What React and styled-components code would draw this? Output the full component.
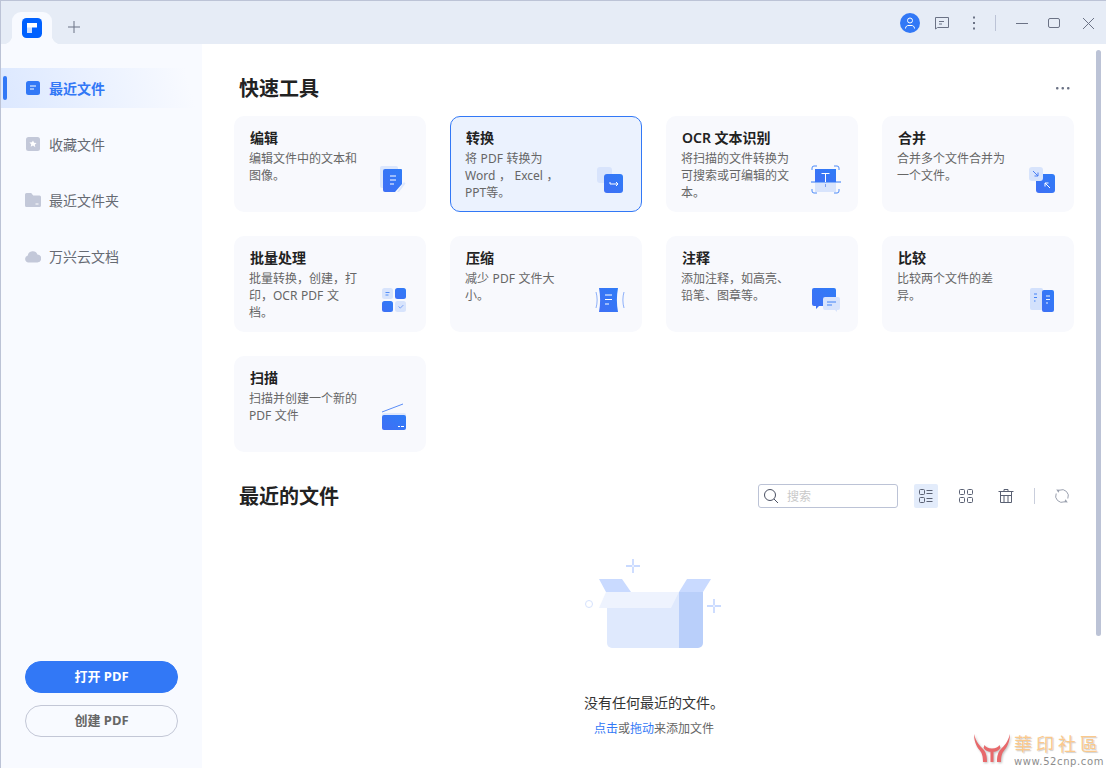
import React from "react";
import styled, { createGlobalStyle } from "styled-components";

const GlobalStyle = createGlobalStyle`
  html, body {
    margin: 0;
    height: 100%;
    overflow: hidden;
    background: #fff;
  }
  * {
    box-sizing: border-box;
  }
`;

const Page = styled.div`
  position: relative;
  display: flex;
  flex-direction: column;
  width: 100vw;
  height: 100vh;
  border-left: 1px solid #bcc3d6;
  font-family: "Noto Sans", "Noto Sans CJK SC", sans-serif;
  overflow: hidden;
`;

const TopBar = styled.div`
  flex: none;
  display: flex;
  align-items: flex-end;
  justify-content: space-between;
  height: 44px;
  padding-left: 11px;
  padding-right: 10px;
  background: #e6ecf6;
  border-top: 1px solid #bcc3d6;
`;

const TabGroup = styled.div`
  display: flex;
  align-items: center;
`;

const Tab = styled.div`
  position: relative;
  display: flex;
  align-items: center;
  justify-content: center;
  width: 40px;
  height: 32px;
  background: #f8faff;
  border-radius: 9px 9px 0 0;
  &::before,
  &::after {
    content: "";
    position: absolute;
    bottom: 0;
    width: 9px;
    height: 9px;
  }
  &::before {
    left: -9px;
    background: radial-gradient(circle at 0 0, transparent 9px, #f8faff 9.5px);
  }
  &::after {
    right: -9px;
    background: radial-gradient(circle at 100% 0, transparent 9px, #f8faff 9.5px);
  }
`;

const NewTab = styled.div`
  display: flex;
  margin-left: 16px;
  padding-bottom: 2px;
`;

const WindowControls = styled.div`
  display: flex;
  align-items: center;
  gap: 12px;
  height: 43px;
`;

const BarDivider = styled.div`
  width: 1px;
  height: 16px;
  margin: 0 4px 0 -1px;
  background: #bcc3d6;
`;

const Body = styled.div`
  flex: 1;
  display: flex;
  min-height: 0;
`;

const Sidebar = styled.aside`
  flex: none;
  display: flex;
  flex-direction: column;
  width: 201px;
  padding-top: 24px;
  background: #f8faff;
`;

const NavList = styled.nav`
  flex: 1;
  display: flex;
  flex-direction: column;
  gap: 16px;
`;

const NavItem = styled.div`
  position: relative;
  display: flex;
  align-items: center;
  gap: 8px;
  height: 40px;
  padding-left: 24px;
  font-size: 14px;
  font-weight: ${(p) => (p.$active ? 600 : 400)};
  color: ${(p) => (p.$active ? "#3278f6" : "#666a73")};
  background: ${(p) =>
    p.$active ? "linear-gradient(75deg, #dce8ff 0%, #f8faff 92%)" : "none"};
  &::before {
    content: "";
    display: ${(p) => (p.$active ? "block" : "none")};
    position: absolute;
    left: 2px;
    top: 8px;
    width: 4px;
    height: 24px;
    border-radius: 2px;
    background: #3278f6;
  }
`;

const SideButtons = styled.div`
  display: flex;
  flex-direction: column;
  gap: 12px;
  padding: 0 24px 31px;
`;

const PillButton = styled.div`
  display: flex;
  align-items: center;
  justify-content: center;
  height: 32px;
  padding-bottom: 4px;
  border-radius: 16px;
  font-size: 13px;
  font-weight: 700;
  color: ${(p) => (p.$primary ? "#fff" : "#666")};
  background: ${(p) => (p.$primary ? "#3278f6" : "transparent")};
  border: 1px solid ${(p) => (p.$primary ? "#3278f6" : "#c3c7d6")};
`;

const Main = styled.main`
  flex: 1;
  display: flex;
  flex-direction: column;
  padding: 30px 0 0 32px;
`;

const Content = styled.div`
  width: 840px;
  display: flex;
  flex-direction: column;
`;

const SectionHead = styled.div`
  display: flex;
  align-items: center;
  justify-content: space-between;
  height: ${(p) => (p.$tall ? "24px" : "28px")};
  padding-left: 5px;
`;

const SectionTitle = styled.h2`
  margin: 0;
  padding-top: 2px;
  font-size: 20px;
  font-weight: 600;
  line-height: 24px;
  color: #222;
`;

const MoreButton = styled.div`
  display: flex;
  margin-right: 4px;
`;

const ToolGrid = styled.div`
  display: grid;
  grid-template-columns: repeat(4, 192px);
  gap: 24px;
  margin: 14px 0 32px;
`;

const ToolCard = styled.div`
  display: flex;
  align-items: flex-end;
  justify-content: space-between;
  height: 96px;
  padding: 11px 13px 13px 15px;
  border-radius: 10px;
  border: 1px solid ${(p) => (p.$active ? "#3278f6" : "transparent")};
  background: ${(p) => (p.$active ? "#ebf2fe" : "#f8f9fd")};
`;

const ToolText = styled.div`
  align-self: flex-start;
  width: 114px;
`;

const ToolName = styled.div`
  font-size: 14px;
  font-weight: 600;
  line-height: 20px;
  color: #222;
  white-space: nowrap;
`;

const ToolDesc = styled.div`
  margin-top: 2px;
  margin-left: -1px;
  font-size: 12px;
  line-height: 17px;
  word-spacing: 0.5px;
  color: #666;
  white-space: pre-line;
`;

const IconSlot = styled.div`
  flex: none;
  display: flex;
  width: 36px;
  height: 36px;
`;

const SearchBox = styled.div`
  display: flex;
  align-items: center;
  gap: 8px;
  width: 140px;
  height: 24px;
  padding-left: 4px;
  border: 1px solid #bcc3d6;
  border-radius: 3px;
  font-size: 12px;
  color: #c9c9c9;
`;

const ListTools = styled.div`
  display: flex;
  align-items: center;
  gap: 16px;
`;

const ViewButton = styled.div`
  display: flex;
  align-items: center;
  justify-content: center;
  width: 24px;
  height: 24px;
  border-radius: 2px;
  background: ${(p) => (p.$active ? "#e3ecfb" : "transparent")};
`;

const ToolDivider = styled.div`
  width: 1px;
  height: 16px;
  margin-right: -1px;
  background: #c9cedc;
`;

const Empty = styled.div`
  display: flex;
  flex-direction: column;
  align-items: center;
  margin-top: 48px;
`;

const EmptyTitle = styled.div`
  margin-top: 41px;
  font-size: 14px;
  line-height: 20px;
  color: #333;
`;

const EmptyHint = styled.div`
  margin-top: 6px;
  font-size: 12px;
  line-height: 20px;
  color: #666;
`;

const HintLink = styled.span`
  color: #3278f6;
`;

const Scrollbar = styled.div`
  position: absolute;
  top: 50px;
  right: 5px;
  width: 5px;
  height: 586px;
  border-radius: 3px;
  background: #bcc3d6;
`;

const Watermark = styled.div`
  position: absolute;
  right: 2px;
  bottom: 0;
  display: flex;
  align-items: flex-start;
  gap: 4px;
`;

const WatermarkLogo = styled.div`
  display: flex;
  margin-top: 3px;
  filter: drop-shadow(1px 1px 1px #bdbdbd);
`;

const WatermarkText = styled.div`
  display: flex;
  flex-direction: column;
  align-items: flex-start;
`;

const WatermarkName = styled.div`
  font-family: "Noto Sans CJK TC", sans-serif;
  font-size: 18px;
  line-height: 26px;
  letter-spacing: 4px;
  color: #fbc98c;
  text-shadow: 1px 1px 1px #cfcfcf;
  white-space: nowrap;
`;

const WatermarkUrl = styled.div`
  font-family: "DejaVu Sans", sans-serif;
  font-size: 10px;
  line-height: 12px;
  letter-spacing: 0.6px;
  color: #8d8d8d;
  white-space: nowrap;
`;

const Blue = ({ id }) => (
  <defs>
    <linearGradient id={id} x1="0" y1="1" x2="1" y2="0">
      <stop offset="0" stopColor="#3f6ff5" />
      <stop offset="1" stopColor="#2f7cf7" />
    </linearGradient>
  </defs>
);

const EditIcon = () => (
  <svg width="36" height="36" viewBox="0 0 36 36" fill="none">
    <Blue id="g-edit" />
    <rect x="4" y="4" width="18" height="22" rx="2" fill="#dce7fd" />
    <path d="M9 7h16a1 1 0 0 1 1 1v14l-7 8H9a2 2 0 0 1-2-2V9a2 2 0 0 1 2-2z" fill="url(#g-edit)" />
    <path d="M14 14h6M14 18h6M14 22h4" stroke="#fff" strokeWidth="1" />
    <path d="M21 30l7-10 1.5 1.5L23 30z" fill="#dce7fd" />
  </svg>
);

const ConvertIcon = () => (
  <svg width="36" height="36" viewBox="0 0 36 36" fill="none">
    <Blue id="g-convert" />
    <rect x="5" y="5" width="15" height="16" rx="3" fill="#d8e4fc" />
    <rect x="12" y="12" width="19" height="19" rx="3" fill="url(#g-convert)" />
    <path d="M18 20v2h8M24 20l2 2-2 2" stroke="#fff" strokeWidth="1" />
  </svg>
);

const OcrIcon = () => (
  <svg width="36" height="36" viewBox="0 0 36 36" fill="none">
    <Blue id="g-ocr" />
    <rect x="7" y="20" width="21" height="10" fill="#d8e4fc" />
    <rect x="7" y="7" width="21" height="13" fill="url(#g-ocr)" />
    <path d="M4 8V6a2 2 0 0 1 2-2h3M26 4h3a2 2 0 0 1 2 2v2M4 27v2a2 2 0 0 0 2 2h3M26 31h3a2 2 0 0 0 2-2v-2" stroke="#4d8bf8" strokeWidth="1" />
    <path d="M3 20h30" stroke="#3278f6" strokeWidth="1" />
    <path d="M13.500 11.500h8M17.500 11.500V20" stroke="#fff" strokeWidth="1" />
    <path d="M17.500 22v3" stroke="#7b9ff5" strokeWidth="1" />
  </svg>
);

const MergeIcon = () => (
  <svg width="36" height="36" viewBox="0 0 36 36" fill="none">
    <Blue id="g-merge" />
    <rect x="12" y="12" width="19" height="19" rx="3" fill="url(#g-merge)" />
    <rect x="5" y="5" width="14" height="14" rx="3" fill="#d8e4fc" />
    <path d="M9 9l5 5M14 10.500V14h-3.500" stroke="#4a7ff5" strokeWidth="1" />
    <path d="M26 26l-5-5M21 24.500V21h3.500" stroke="#fff" strokeWidth="1" />
  </svg>
);

const BatchIcon = () => (
  <svg width="36" height="36" viewBox="0 0 36 36" fill="none">
    <Blue id="g-batch" />
    <rect x="6" y="6" width="11" height="11" rx="2.500" fill="#d8e4fc" />
    <rect x="19" y="6" width="11" height="11" rx="2.500" fill="url(#g-batch)" />
    <rect x="6" y="19" width="11" height="11" rx="2.500" fill="url(#g-batch)" />
    <rect x="19" y="19" width="11" height="11" rx="2.500" fill="#d8e4fc" />
    <path d="M9.500 10.500h4M9.500 13h3" stroke="#3278f6" strokeWidth="0.8" />
    <path d="M22.500 24.500l1.800 1.600 3-3" stroke="#6f9af6" strokeWidth="0.9" />
  </svg>
);

const CompressIcon = () => (
  <svg width="36" height="36" viewBox="0 0 36 36" fill="none">
    <Blue id="g-compress" />
    <path d="M7 6h19c-1.500 8-1.500 16 0 24H7c1.500-8 1.500-16 0-24z" fill="url(#g-compress)" />
    <path d="M13 13h7M13 17.500h7M13 22h4" stroke="#fff" strokeWidth="1" />
    <path d="M4 10c1.500 5 1.500 11 0 16M32 10c-1.500 5-1.500 11 0 16" stroke="#8db0fa" strokeWidth="1" />
  </svg>
);

const AnnotateIcon = () => (
  <svg width="36" height="36" viewBox="0 0 36 36" fill="none">
    <Blue id="g-annotate" />
    <path d="M6 6h20a2 2 0 0 1 2 2v16H11l-3 3v-3H6a2 2 0 0 1-2-2V8a2 2 0 0 1 2-2z" fill="url(#g-annotate)" />
    <path d="M17 15h13a2 2 0 0 1 2 2v9a2 2 0 0 1-2 2h-1v2l-2-2H17a2 2 0 0 1-2-2v-9a2 2 0 0 1 2-2z" fill="#d8e4fc" />
    <path d="M19 20h9M19 23h5" stroke="#3278f6" strokeWidth="0.9" />
  </svg>
);

const CompareIcon = () => (
  <svg width="36" height="36" viewBox="0 0 36 36" fill="none">
    <Blue id="g-compare" />
    <rect x="6" y="6" width="13" height="22" rx="2" fill="#d3e1fc" />
    <rect x="18" y="8" width="12" height="22" rx="2" fill="url(#g-compare)" />
    <path d="M10 12h3M10 15.500h3M10 19h1.500" stroke="#3278f6" strokeWidth="0.9" />
    <path d="M22 14h4M22 17.500h4M22 21h2" stroke="#fff" strokeWidth="0.9" />
  </svg>
);

const ScanIcon = () => (
  <svg width="36" height="36" viewBox="0 0 36 36" fill="none">
    <Blue id="g-scan" />
    <path d="M6 10l21-8" stroke="#5a8df7" strokeWidth="1" />
    <path d="M8 11h20a2 2 0 0 1 2 2v2H6v-2a2 2 0 0 1 2-2z" fill="#e0e9fc" />
    <path d="M8 13h20a2 2 0 0 1 2 2v11a2 2 0 0 1-2 2H8a2 2 0 0 1-2-2V15a2 2 0 0 1 2-2z" fill="url(#g-scan)" />
    <path d="M22 24.500h2M25 24.500h3" stroke="#fff" strokeWidth="1" />
  </svg>
);

const tools = [
  { name: "编辑", desc: "编辑文件中的文本和\n图像。", Icon: EditIcon },
  { name: "转换", desc: "将 PDF 转换为\nWord ， Excel ，\nPPT等。", Icon: ConvertIcon, active: true },
  { name: "OCR 文本识别", desc: "将扫描的文件转换为\n可搜索或可编辑的文\n本。", Icon: OcrIcon },
  { name: "合并", desc: "合并多个文件合并为\n一个文件。", Icon: MergeIcon },
  { name: "批量处理", desc: "批量转换，创建，打\n印，OCR PDF 文\n档。", Icon: BatchIcon },
  { name: "压缩", desc: "减少 PDF 文件大\n小。", Icon: CompressIcon },
  { name: "注释", desc: "添加注释，如高亮、\n铅笔、图章等。", Icon: AnnotateIcon },
  { name: "比较", desc: "比较两个文件的差\n异。", Icon: CompareIcon },
  { name: "扫描", desc: "扫描并创建一个新的\nPDF 文件", Icon: ScanIcon },
];

const FileNavIcon = () => (
  <svg width="16" height="16" viewBox="0 0 16 16">
    <rect x="1" y="1" width="14" height="14" rx="2.500" fill="#3278f6" />
    <path d="M5 6h6M5 9h4" stroke="#fff" strokeWidth="1" />
  </svg>
);

const StarNavIcon = () => (
  <svg width="16" height="16" viewBox="0 0 16 16">
    <rect x="1" y="1" width="14" height="14" rx="2.500" fill="#c3c8d9" />
    <path d="M8 4.500l1.100 2.300 2.500.3-1.800 1.700.5 2.500L8 9.600l-2.300 1.200.5-2.500-1.800-1.700 2.500-.3z" fill="#fff" />
  </svg>
);

const FolderNavIcon = () => (
  <svg width="16" height="16" viewBox="0 0 16 16">
    <path d="M1.500 1h4.700l2 2.500h6.300a1.500 1.500 0 0 1 1.500 1.500v8.500a1.500 1.500 0 0 1-1.500 1.500h-13A1.500 1.500 0 0 1 0 13.500v-11A1.500 1.500 0 0 1 1.500 1z" fill="#c3c8d9" />
    <path d="M10.500 12h3" stroke="#fff" strokeWidth="1" />
  </svg>
);

const CloudNavIcon = () => (
  <svg width="16" height="16" viewBox="0 0 16 16">
    <path d="M3.500 14.500a3.500 3.500 0 0 1-.7-6.900A5 5 0 0 1 12.400 6.500 4 4 0 0 1 12 14.500z" fill="#c3c8d9" />
  </svg>
);

const navItems = [
  { label: "最近文件", Icon: FileNavIcon, active: true },
  { label: "收藏文件", Icon: StarNavIcon },
  { label: "最近文件夹", Icon: FolderNavIcon },
  { label: "万兴云文档", Icon: CloudNavIcon },
];

const Logo = () => (
  <svg width="20" height="20" viewBox="0 0 20 20">
    <rect width="20" height="20" rx="4.500" fill="#0061ff" />
    <path d="M5 5h10v4.500H10V15H5z" fill="#fff" />
    <path d="M5 9.500h5V15H5z" fill="#cfe0ff" />
  </svg>
);

const Plus = () => (
  <svg width="12" height="12" viewBox="0 0 12 12">
    <path d="M6 0v12M0 6h12" stroke="#6b7285" strokeWidth="1" />
  </svg>
);

const Avatar = () => (
  <svg width="20" height="20" viewBox="0 0 20 20" fill="none">
    <circle cx="10" cy="10" r="10" fill="#3278f6" />
    <path d="M7.500 7.500a2.500 2.500 0 1 1 5 0 2.500 2.500 0 0 1-5 0zM5.500 15.500c0-2.300 2-3 2.500-3h4c.5 0 2.500.7 2.500 3" stroke="#fff" strokeWidth="1" />
  </svg>
);

const Chat = () => (
  <svg width="20" height="20" viewBox="0 0 20 20" fill="none">
    <path d="M3.500 4.500h13v10H5.500L3.500 16z" stroke="#6b7285" strokeWidth="1" strokeLinejoin="round" />
    <path d="M7 8.500h5M7 11h3" stroke="#6b7285" strokeWidth="1" />
  </svg>
);

const Dots = () => (
  <svg width="20" height="20" viewBox="0 0 20 20">
    <rect x="9" y="3.500" width="2" height="2" fill="#6b7285" />
    <rect x="9" y="9" width="2" height="2" fill="#6b7285" />
    <rect x="9" y="14.500" width="2" height="2" fill="#6b7285" />
  </svg>
);

const Minimize = () => (
  <svg width="20" height="20" viewBox="0 0 20 20">
    <path d="M4 10.500h12" stroke="#6b7285" strokeWidth="1" />
  </svg>
);

const Maximize = () => (
  <svg width="20" height="20" viewBox="0 0 20 20" fill="none">
    <rect x="4.500" y="5.500" width="11" height="9" rx="1.500" stroke="#6b7285" strokeWidth="1" />
  </svg>
);

const CloseIcon = () => (
  <svg width="20" height="20" viewBox="0 0 20 20">
    <path d="M7 5l11 11M18 5L7 16" stroke="#6b7285" strokeWidth="1" />
  </svg>
);

const More = () => (
  <svg width="14" height="4" viewBox="0 0 14 4">
    <rect x="0" y="1" width="2.500" height="2.500" rx="1" fill="#6b7285" />
    <rect x="5.500" y="1" width="2.500" height="2.500" rx="1" fill="#6b7285" />
    <rect x="11" y="1" width="2.500" height="2.500" rx="1" fill="#6b7285" />
  </svg>
);

const SearchIcon = () => (
  <svg width="16" height="16" viewBox="0 0 16 16" fill="none">
    <circle cx="7" cy="7" r="5.500" stroke="#4a5062" strokeWidth="1" />
    <path d="M11 11l4 4" stroke="#4a5062" strokeWidth="1" />
  </svg>
);

const ListIcon = () => (
  <svg width="16" height="16" viewBox="0 0 16 16" fill="none" stroke="#5a6173" strokeWidth="1">
    <rect x="1.500" y="1.500" width="5" height="5" rx="1" />
    <rect x="1.500" y="9.500" width="5" height="5" rx="1" />
    <path d="M8.500 2.500h6M8.500 5.500h6M8.500 10.500h6M8.500 13.500h6" />
  </svg>
);

const GridIcon = () => (
  <svg width="16" height="16" viewBox="0 0 16 16" fill="none" stroke="#5a6173" strokeWidth="1">
    <rect x="1.500" y="1.500" width="5" height="5" rx="1" />
    <rect x="9.500" y="1.500" width="5" height="5" rx="1" />
    <rect x="1.500" y="9.500" width="5" height="5" rx="1" />
    <rect x="9.500" y="9.500" width="5" height="5" rx="1" />
  </svg>
);

const BinIcon = () => (
  <svg width="16" height="16" viewBox="0 0 16 16" fill="none" stroke="#5a6173" strokeWidth="1">
    <path d="M6 3.500v-2h4v2M.5 3.500h15M2.500 3.500v11h11v-11M6 8v6.500M10 8v6.500M2.500 7.500h11" />
  </svg>
);

const RefreshIcon = () => (
  <svg width="16" height="16" viewBox="0 0 16 16" fill="none" stroke="#9aa0ae" strokeWidth="1">
    <path d="M5.500 2.200A6.300 6.300 0 0 1 13.800 10.500M10.500 13.800A6.300 6.300 0 0 1 2.200 5.500" />
    <path d="M2.200 1.500l3.800.3-1.600 3zM13.800 14.500l-3.800-.3 1.600-3z" fill="#9aa0ae" stroke="none" />
  </svg>
);

const EmptyBox = () => (
  <svg width="140" height="96" viewBox="0 0 140 96">
    <path d="M49 3v6.300M49 10.700V17M42 10h6.300M49.700 10H56M130 43v6.300M130 50.700V57M123 50h6.300M130.700 50H137" stroke="#c9daff" strokeWidth="1.800" />
    <circle cx="5" cy="48" r="3.500" fill="none" stroke="#d6e2fd" strokeWidth="1" />
    <path d="M15 23h23l9 13H22zM103 23h24l-8 13H95z" fill="#c9daff" />
    <path d="M23 36h72v56H28a5 5 0 0 1-5-5z" fill="#dfe9fd" />
    <path d="M95 36h24v51a5 5 0 0 1-5 5H95z" fill="#b9cffa" />
    <path d="M22 36h73l-8 16H15z" fill="#eef3fe" />
  </svg>
);

const MarkLogo = () => (
  <svg width="36" height="30" viewBox="0 0 36 30">
    <path d="M0 1c2 8 6 12 9 15 3 3 4 7 4 13H9c0-6-1-9-3.500-12C2 13 0 7 0 1zM36 1c-2 8-6 12-9 15-3 3-4 7-4 13h4c0-6 1-9 3.500-12C34 13 36 7 36 1z" fill="#e8696b" />
    <path d="M10.500 12c1.500 2 3.500 3.500 7.500 3.500s6-1.500 7.500-3.500l1 3c-2 2.500-4.500 4-8.500 4s-6.500-1.500-8.500-4z" fill="#e8696b" />
    <rect x="16.500" y="19" width="3" height="10" fill="#e8696b" />
  </svg>
);

export default function App() {
  return (
    <Page>
      <GlobalStyle />
      <TopBar>
        <TabGroup>
          <Tab>
            <Logo />
          </Tab>
          <NewTab>
            <Plus />
          </NewTab>
        </TabGroup>
        <WindowControls>
          <Avatar />
          <Chat />
          <Dots />
          <BarDivider />
          <Minimize />
          <Maximize />
          <CloseIcon />
        </WindowControls>
      </TopBar>
      <Body>
        <Sidebar>
          <NavList>
            {navItems.map(({ label, Icon, active }) => (
              <NavItem key={label} $active={active}>
                <Icon />
                {label}
              </NavItem>
            ))}
          </NavList>
          <SideButtons>
            <PillButton $primary>打开 PDF</PillButton>
            <PillButton>创建 PDF</PillButton>
          </SideButtons>
        </Sidebar>
        <Main>
          <Content>
            <SectionHead>
              <SectionTitle>快速工具</SectionTitle>
              <MoreButton>
                <More />
              </MoreButton>
            </SectionHead>
            <ToolGrid>
              {tools.map(({ name, desc, Icon, active }) => (
                <ToolCard key={name} $active={active}>
                  <ToolText>
                    <ToolName>{name}</ToolName>
                    <ToolDesc>{desc}</ToolDesc>
                  </ToolText>
                  <IconSlot>
                    <Icon />
                  </IconSlot>
                </ToolCard>
              ))}
            </ToolGrid>
            <SectionHead $tall>
              <SectionTitle>最近的文件</SectionTitle>
              <ListTools>
                <SearchBox>
                  <SearchIcon />
                  搜索
                </SearchBox>
                <ViewButton $active>
                  <ListIcon />
                </ViewButton>
                <ViewButton>
                  <GridIcon />
                </ViewButton>
                <ViewButton>
                  <BinIcon />
                </ViewButton>
                <ToolDivider />
                <ViewButton>
                  <RefreshIcon />
                </ViewButton>
              </ListTools>
            </SectionHead>
            <Empty>
              <EmptyBox />
              <EmptyTitle>没有任何最近的文件。</EmptyTitle>
              <EmptyHint>
                <HintLink>点击</HintLink>或<HintLink>拖动</HintLink>来添加文件
              </EmptyHint>
            </Empty>
          </Content>
        </Main>
      </Body>
      <Scrollbar />
      <Watermark>
        <WatermarkLogo>
          <MarkLogo />
        </WatermarkLogo>
        <WatermarkText>
          <WatermarkName>華印社區</WatermarkName>
          <WatermarkUrl>www.52cnp.com</WatermarkUrl>
        </WatermarkText>
      </Watermark>
    </Page>
  );
}
